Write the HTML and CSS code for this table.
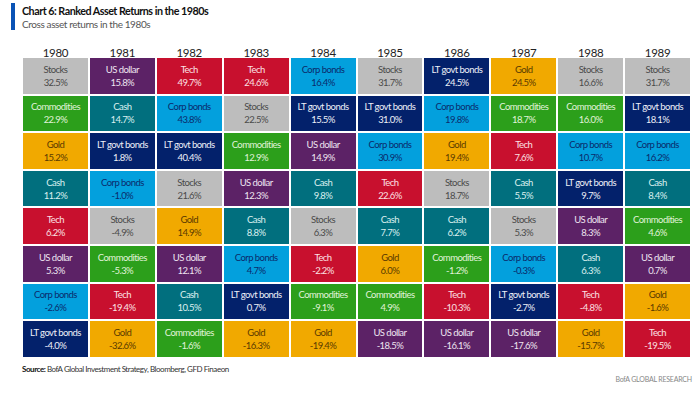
FILE: index.html
```html
<!DOCTYPE html>
<html>
<head>
<meta charset="utf-8">
<link rel="stylesheet" href="styles.css">
</head>
<body>
<div class="page">
  <header class="head">
    <div class="bar"></div>
    <div class="titles">
      <div class="title">Chart 6: Ranked Asset Returns in the 1980s</div>
      <div class="subtitle">Cross asset returns in the 1980s</div>
    </div>
  </header>
  <div class="chart">
    <div class="year">1980</div>
    <div class="cell stocks"><span>Stocks</span><span>32.5%</span></div>
    <div class="cell comm"><span>Commodities</span><span>22.9%</span></div>
    <div class="cell gold"><span>Gold</span><span>15.2%</span></div>
    <div class="cell cash"><span>Cash</span><span>11.2%</span></div>
    <div class="cell tech"><span>Tech</span><span>6.2%</span></div>
    <div class="cell usd"><span>US dollar</span><span>5.3%</span></div>
    <div class="cell corp"><span>Corp bonds</span><span>-2.6%</span></div>
    <div class="cell govt"><span>LT govt bonds</span><span>-4.0%</span></div>

    <div class="year">1981</div>
    <div class="cell usd"><span>US dollar</span><span>15.8%</span></div>
    <div class="cell cash"><span>Cash</span><span>14.7%</span></div>
    <div class="cell govt"><span>LT govt bonds</span><span>1.8%</span></div>
    <div class="cell corp"><span>Corp bonds</span><span>-1.0%</span></div>
    <div class="cell stocks"><span>Stocks</span><span>-4.9%</span></div>
    <div class="cell comm"><span>Commodities</span><span>-5.3%</span></div>
    <div class="cell tech"><span>Tech</span><span>-19.4%</span></div>
    <div class="cell gold"><span>Gold</span><span>-32.6%</span></div>

    <div class="year">1982</div>
    <div class="cell tech"><span>Tech</span><span>49.7%</span></div>
    <div class="cell corp"><span>Corp bonds</span><span>43.8%</span></div>
    <div class="cell govt"><span>LT govt bonds</span><span>40.4%</span></div>
    <div class="cell stocks"><span>Stocks</span><span>21.6%</span></div>
    <div class="cell gold"><span>Gold</span><span>14.9%</span></div>
    <div class="cell usd"><span>US dollar</span><span>12.1%</span></div>
    <div class="cell cash"><span>Cash</span><span>10.5%</span></div>
    <div class="cell comm"><span>Commodities</span><span>-1.6%</span></div>

    <div class="year">1983</div>
    <div class="cell tech"><span>Tech</span><span>24.6%</span></div>
    <div class="cell stocks"><span>Stocks</span><span>22.5%</span></div>
    <div class="cell comm"><span>Commodities</span><span>12.9%</span></div>
    <div class="cell usd"><span>US dollar</span><span>12.3%</span></div>
    <div class="cell cash"><span>Cash</span><span>8.8%</span></div>
    <div class="cell corp"><span>Corp bonds</span><span>4.7%</span></div>
    <div class="cell govt"><span>LT govt bonds</span><span>0.7%</span></div>
    <div class="cell gold"><span>Gold</span><span>-16.3%</span></div>

    <div class="year">1984</div>
    <div class="cell corp"><span>Corp bonds</span><span>16.4%</span></div>
    <div class="cell govt"><span>LT govt bonds</span><span>15.5%</span></div>
    <div class="cell usd"><span>US dollar</span><span>14.9%</span></div>
    <div class="cell cash"><span>Cash</span><span>9.8%</span></div>
    <div class="cell stocks"><span>Stocks</span><span>6.3%</span></div>
    <div class="cell tech"><span>Tech</span><span>-2.2%</span></div>
    <div class="cell comm"><span>Commodities</span><span>-9.1%</span></div>
    <div class="cell gold"><span>Gold</span><span>-19.4%</span></div>

    <div class="year">1985</div>
    <div class="cell stocks"><span>Stocks</span><span>31.7%</span></div>
    <div class="cell govt"><span>LT govt bonds</span><span>31.0%</span></div>
    <div class="cell corp"><span>Corp bonds</span><span>30.9%</span></div>
    <div class="cell tech"><span>Tech</span><span>22.6%</span></div>
    <div class="cell cash"><span>Cash</span><span>7.7%</span></div>
    <div class="cell gold"><span>Gold</span><span>6.0%</span></div>
    <div class="cell comm"><span>Commodities</span><span>4.9%</span></div>
    <div class="cell usd"><span>US dollar</span><span>-18.5%</span></div>

    <div class="year">1986</div>
    <div class="cell govt"><span>LT govt bonds</span><span>24.5%</span></div>
    <div class="cell corp"><span>Corp bonds</span><span>19.8%</span></div>
    <div class="cell gold"><span>Gold</span><span>19.4%</span></div>
    <div class="cell stocks"><span>Stocks</span><span>18.7%</span></div>
    <div class="cell cash"><span>Cash</span><span>6.2%</span></div>
    <div class="cell comm"><span>Commodities</span><span>-1.2%</span></div>
    <div class="cell tech"><span>Tech</span><span>-10.3%</span></div>
    <div class="cell usd"><span>US dollar</span><span>-16.1%</span></div>

    <div class="year">1987</div>
    <div class="cell gold"><span>Gold</span><span>24.5%</span></div>
    <div class="cell comm"><span>Commodities</span><span>18.7%</span></div>
    <div class="cell tech"><span>Tech</span><span>7.6%</span></div>
    <div class="cell cash"><span>Cash</span><span>5.5%</span></div>
    <div class="cell stocks"><span>Stocks</span><span>5.3%</span></div>
    <div class="cell corp"><span>Corp bonds</span><span>-0.3%</span></div>
    <div class="cell govt"><span>LT govt bonds</span><span>-2.7%</span></div>
    <div class="cell usd"><span>US dollar</span><span>-17.6%</span></div>

    <div class="year">1988</div>
    <div class="cell stocks"><span>Stocks</span><span>16.6%</span></div>
    <div class="cell comm"><span>Commodities</span><span>16.0%</span></div>
    <div class="cell corp"><span>Corp bonds</span><span>10.7%</span></div>
    <div class="cell govt"><span>LT govt bonds</span><span>9.7%</span></div>
    <div class="cell usd"><span>US dollar</span><span>8.3%</span></div>
    <div class="cell cash"><span>Cash</span><span>6.3%</span></div>
    <div class="cell tech"><span>Tech</span><span>-4.8%</span></div>
    <div class="cell gold"><span>Gold</span><span>-15.7%</span></div>

    <div class="year">1989</div>
    <div class="cell stocks"><span>Stocks</span><span>31.7%</span></div>
    <div class="cell govt"><span>LT govt bonds</span><span>18.1%</span></div>
    <div class="cell corp"><span>Corp bonds</span><span>16.2%</span></div>
    <div class="cell cash"><span>Cash</span><span>8.4%</span></div>
    <div class="cell comm"><span>Commodities</span><span>4.6%</span></div>
    <div class="cell usd"><span>US dollar</span><span>0.7%</span></div>
    <div class="cell gold"><span>Gold</span><span>-1.6%</span></div>
    <div class="cell tech"><span>Tech</span><span>-19.5%</span></div>
  </div>
  <div class="source"><b>Source:</b> BofA Global Investment Strategy, Bloomberg, GFD Finaeon</div>
  <div class="brand">BofA GLOBAL RESEARCH</div>
</div>
</body>
</html>
```

FILE: styles.css
```css
* { box-sizing: border-box; }
html, body { margin: 0; padding: 0; background: #fff; }
body { font-family: Lato, "Open Sans", sans-serif; color: #222; }
.page { width: 700px; height: 400px; position: relative; }

.head { display: flex; gap: 7px; padding: 3px 0 0 11px; height: 33px; }
.bar { width: 4px; height: 27px; background: #0a53b5; }
.titles { display: flex; flex-direction: column; }
.title { font-weight: 700; font-size: 10.75px; line-height: 14px; margin-top: 1px; color: #111; letter-spacing: -0.5px; }
.subtitle { font-size: 10px; line-height: 12px; color: #555; letter-spacing: -0.4px; }

.chart {
  margin: 14px 0 0 23px;
  width: 667px;
  display: grid;
  grid-template-columns: repeat(10, 1fr);
  grid-template-rows: 9px repeat(8, 35.6px);
  grid-auto-flow: column;
  column-gap: 2px;
  row-gap: 2px;
}
.year { text-align: center; font-size: 11.5px; line-height: 11px; color: #222; letter-spacing: -0.3px; }
.cell {
  display: flex; flex-direction: column; align-items: center; justify-content: center;
  font-size: 9.5px; line-height: 13px; letter-spacing: -0.55px; color: #fff;
}
.stocks { background: #bdbdbd; color: #4a4a4a; }
.usd { background: #5c2266; color: #eee4f0; }
.tech { background: #c8102e; color: #fbe0e4; }
.corp { background: #03a0dd; color: #0b2a6b; }
.comm { background: #2c9f1b; color: #e0f3da; }
.cash { background: #016f7e; color: #dcefef; }
.govt { background: #03216b; color: #eef0f8; }
.gold { background: #f1a900; color: #5a3a00; }

.source { margin: 7px 0 0 22px; font-size: 8px; line-height: 10px; color: #333; letter-spacing: -0.45px; }
.source b { color: #111; }
.brand { text-align: right; padding-right: 8px; margin-top: 1px; font-size: 7px; line-height: 9px; color: #888; letter-spacing: -0.2px; }
```
